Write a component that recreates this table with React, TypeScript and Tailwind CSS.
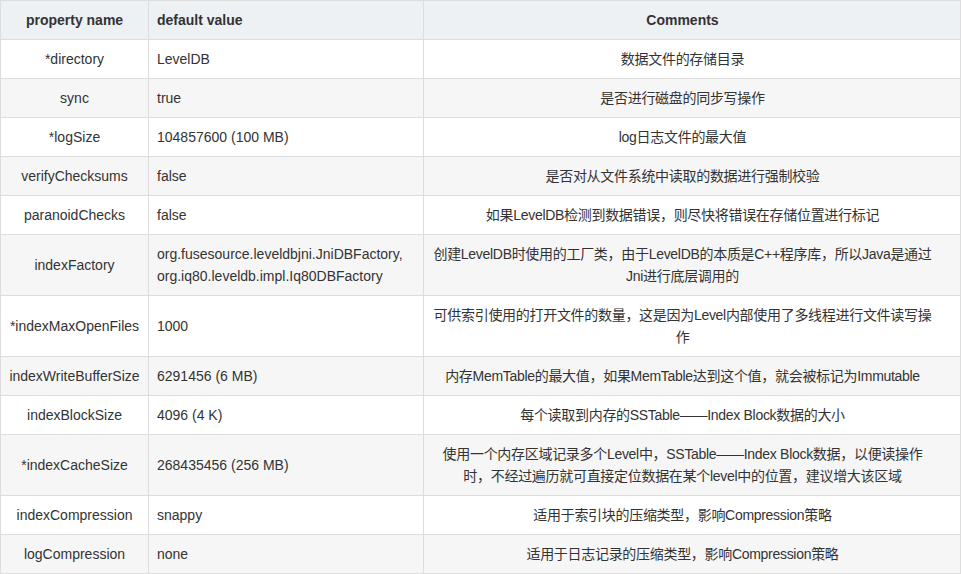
const rows = [
  { name: '*directory', value: ['LevelDB'], comment: '数据文件的存储目录' },
  { name: 'sync', value: ['true'], comment: '是否进行磁盘的同步写操作' },
  { name: '*logSize', value: ['104857600 (100 MB)'], comment: 'log日志文件的最大值' },
  { name: 'verifyChecksums', value: ['false'], comment: '是否对从文件系统中读取的数据进行强制校验' },
  { name: 'paranoidChecks', value: ['false'], comment: '如果LevelDB检测到数据错误，则尽快将错误在存储位置进行标记' },
  {
    name: 'indexFactory',
    value: ['org.fusesource.leveldbjni.JniDBFactory,', 'org.iq80.leveldb.impl.Iq80DBFactory'],
    comment: '创建LevelDB时使用的工厂类，由于LevelDB的本质是C++程序库，所以Java是通过Jni进行底层调用的',
  },
  {
    name: '*indexMaxOpenFiles',
    value: ['1000'],
    comment: '可供索引使用的打开文件的数量，这是因为Level内部使用了多线程进行文件读写操作',
  },
  {
    name: 'indexWriteBufferSize',
    value: ['6291456 (6 MB)'],
    comment: '内存MemTable的最大值，如果MemTable达到这个值，就会被标记为Immutable',
  },
  { name: 'indexBlockSize', value: ['4096 (4 K)'], comment: '每个读取到内存的SSTable——Index Block数据的大小' },
  {
    name: '*indexCacheSize',
    value: ['268435456 (256 MB)'],
    comment: '使用一个内存区域记录多个Level中，SSTable——Index Block数据，以便读操作时，不经过遍历就可直接定位数据在某个level中的位置，建议增大该区域',
  },
  { name: 'indexCompression', value: ['snappy'], comment: '适用于索引块的压缩类型，影响Compression策略' },
  { name: 'logCompression', value: ['none'], comment: '适用于日志记录的压缩类型，影响Compression策略' },
]

export default function App() {
  return (
    <div
      className="w-[961px] h-[574px] bg-white text-[14px] leading-[22px] text-[#333] [text-autospace:no-autospace]"
      style={{ fontFamily: '"Liberation Sans", Arial, "Noto Sans CJK SC", sans-serif' }}
    >
      <table className="w-[961px] table-fixed border-collapse">
        <colgroup>
          <col className="w-[148px]" />
          <col className="w-[275px]" />
          <col />
        </colgroup>
        <thead>
          <tr className="bg-[#eef1f4]">
            <th className="border border-[#dddddd] px-2 py-2 text-center font-bold">property name</th>
            <th className="border border-[#dddddd] px-2 py-2 text-left font-bold">default value</th>
            <th className="border border-[#dddddd] pl-2 pr-[27px] py-2 text-center font-bold">Comments</th>
          </tr>
        </thead>
        <tbody>
          {rows.map((row, i) => (
            <tr key={row.name} className={i % 2 === 0 ? 'bg-white' : 'bg-[#f6f6f6]'}>
              <td className="border border-[#dddddd] px-2 py-2 text-center">{row.name}</td>
              <td className="border border-[#dddddd] px-2 py-2 text-left">
                {row.value.map((v) => (
                  <div key={v}>{v}</div>
                ))}
              </td>
              <td className="border border-[#dddddd] pl-2 pr-[27px] py-2 text-center tracking-[-0.3px]">
                {row.comment}
              </td>
            </tr>
          ))}
        </tbody>
      </table>
    </div>
  )
}
